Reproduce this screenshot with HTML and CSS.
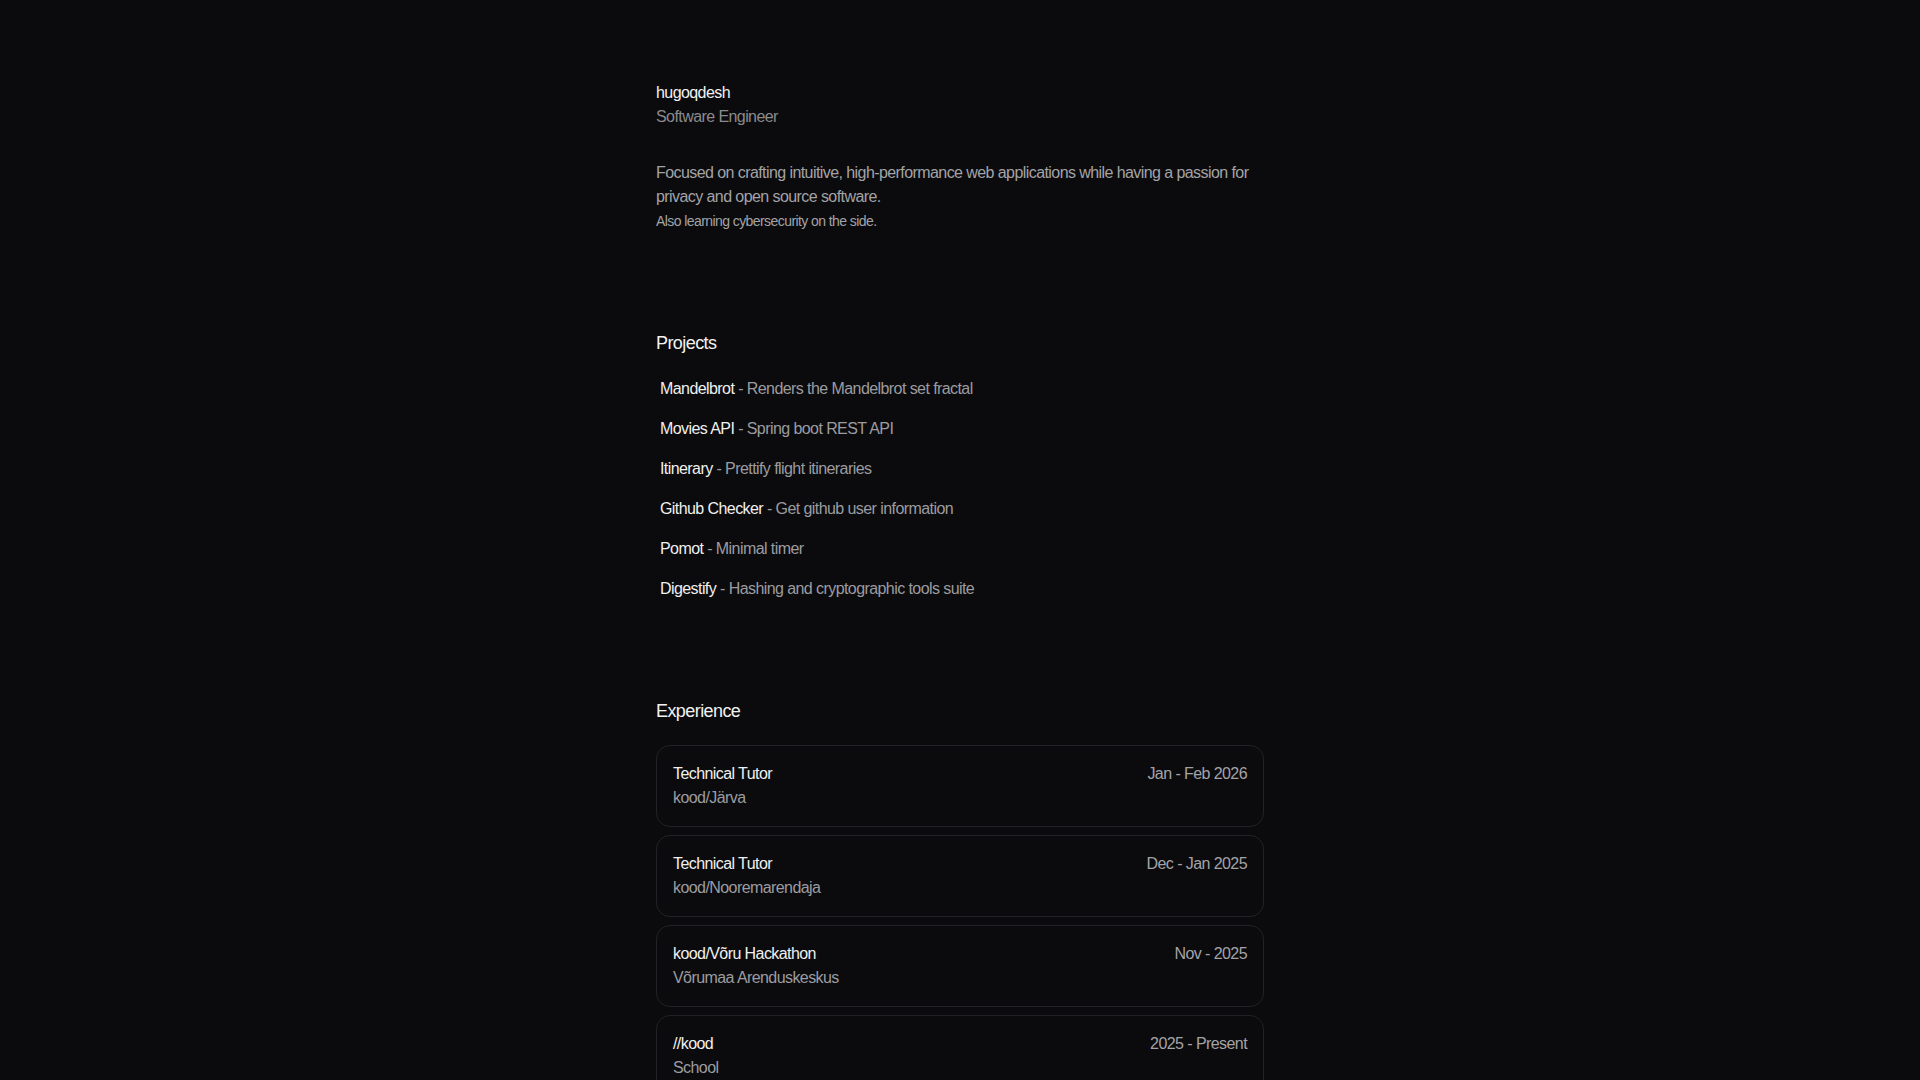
FILE: index.html
```html
<!DOCTYPE html>
<html lang="en">
<head>
<meta charset="utf-8">
<title>hugoqdesh</title>
<link rel="stylesheet" href="styles.css">
</head>
<body>
<main class="page">
  <header class="intro">
    <h1 class="name">hugoqdesh</h1>
    <p class="role">Software Engineer</p>
    <p class="bio">Focused on crafting intuitive, high-performance web applications while having a passion for privacy and open source software.</p>
    <p class="bio-note">Also learning cybersecurity on the side.</p>
  </header>

  <section class="section">
    <h2 class="section-title">Projects</h2>
    <ul class="projects">
      <li><a class="project" href="#"><span class="project-name">Mandelbrot</span> - Renders the Mandelbrot set fractal</a></li>
      <li><a class="project" href="#"><span class="project-name">Movies API</span> - Spring boot REST API</a></li>
      <li><a class="project" href="#"><span class="project-name">Itinerary</span> - Prettify flight itineraries</a></li>
      <li><a class="project" href="#"><span class="project-name">Github Checker</span> - Get github user information</a></li>
      <li><a class="project" href="#"><span class="project-name">Pomot</span> - Minimal timer</a></li>
      <li><a class="project" href="#"><span class="project-name">Digestify</span> - Hashing and cryptographic tools suite</a></li>
    </ul>
  </section>

  <section class="section">
    <h2 class="section-title">Experience</h2>
    <div class="jobs">
      <article class="job">
        <div class="job-row"><span class="job-title">Technical Tutor</span><span class="job-date">Jan - Feb 2026</span></div>
        <div class="job-org">kood/Järva</div>
      </article>
      <article class="job">
        <div class="job-row"><span class="job-title">Technical Tutor</span><span class="job-date">Dec - Jan 2025</span></div>
        <div class="job-org">kood/Nooremarendaja</div>
      </article>
      <article class="job">
        <div class="job-row"><span class="job-title">kood/Võru Hackathon</span><span class="job-date">Nov - 2025</span></div>
        <div class="job-org">Võrumaa Arenduskeskus</div>
      </article>
      <article class="job">
        <div class="job-row"><span class="job-title">//kood</span><span class="job-date">2025 - Present</span></div>
        <div class="job-org">School</div>
      </article>
    </div>
  </section>
</main>
</body>
</html>
```

FILE: styles.css
```css
* { box-sizing: border-box; }

html, body {
  margin: 0;
  padding: 0;
  background: #0b0b0d;
}

body {
  font-family: "Liberation Sans", Arial, Helvetica, sans-serif;
  font-size: 16px;
  line-height: 24px;
  letter-spacing: -0.036em;
  color: #ededed;
}

.page {
  width: 608px;
  margin: 0 auto;
  padding: 81px 0 80px;
}

.intro p, .intro h1 { margin: 0; }

.name {
  font-size: 16px;
  font-weight: 400;
  line-height: 24px;
  color: #f2f2f2;
}

.role {
  color: #8a8a8e;
}

.bio {
  margin-top: 32px !important;
  color: #a3a3a7;
}

.bio-note {
  font-size: 14px;
  line-height: 24px;
  color: #a3a3a7;
}

.section {
  margin-top: 96px;
}

.section-title {
  margin: 0 0 20px;
  font-size: 18px;
  font-weight: 400;
  line-height: 28px;
  color: #f2f2f2;
}

.projects {
  list-style: none;
  margin: 0;
  padding: 0;
  display: flex;
  flex-direction: column;
  gap: 16px;
}

.project {
  display: inline-block;
  padding: 0 4px;
  text-decoration: none;
  color: #9c9ca0;
}

.project-name {
  color: #f0f0f0;
}

.jobs {
  display: flex;
  flex-direction: column;
  gap: 8px;
}

.job {
  border: 1px solid #222226;
  border-radius: 14px;
  padding: 16px;
}

.job-row {
  display: flex;
  justify-content: space-between;
  align-items: baseline;
}

.job-title {
  color: #f0f0f0;
}

.job-date {
  color: #a3a3a7;
}

.job-org {
  color: #9c9ca0;
}
```
